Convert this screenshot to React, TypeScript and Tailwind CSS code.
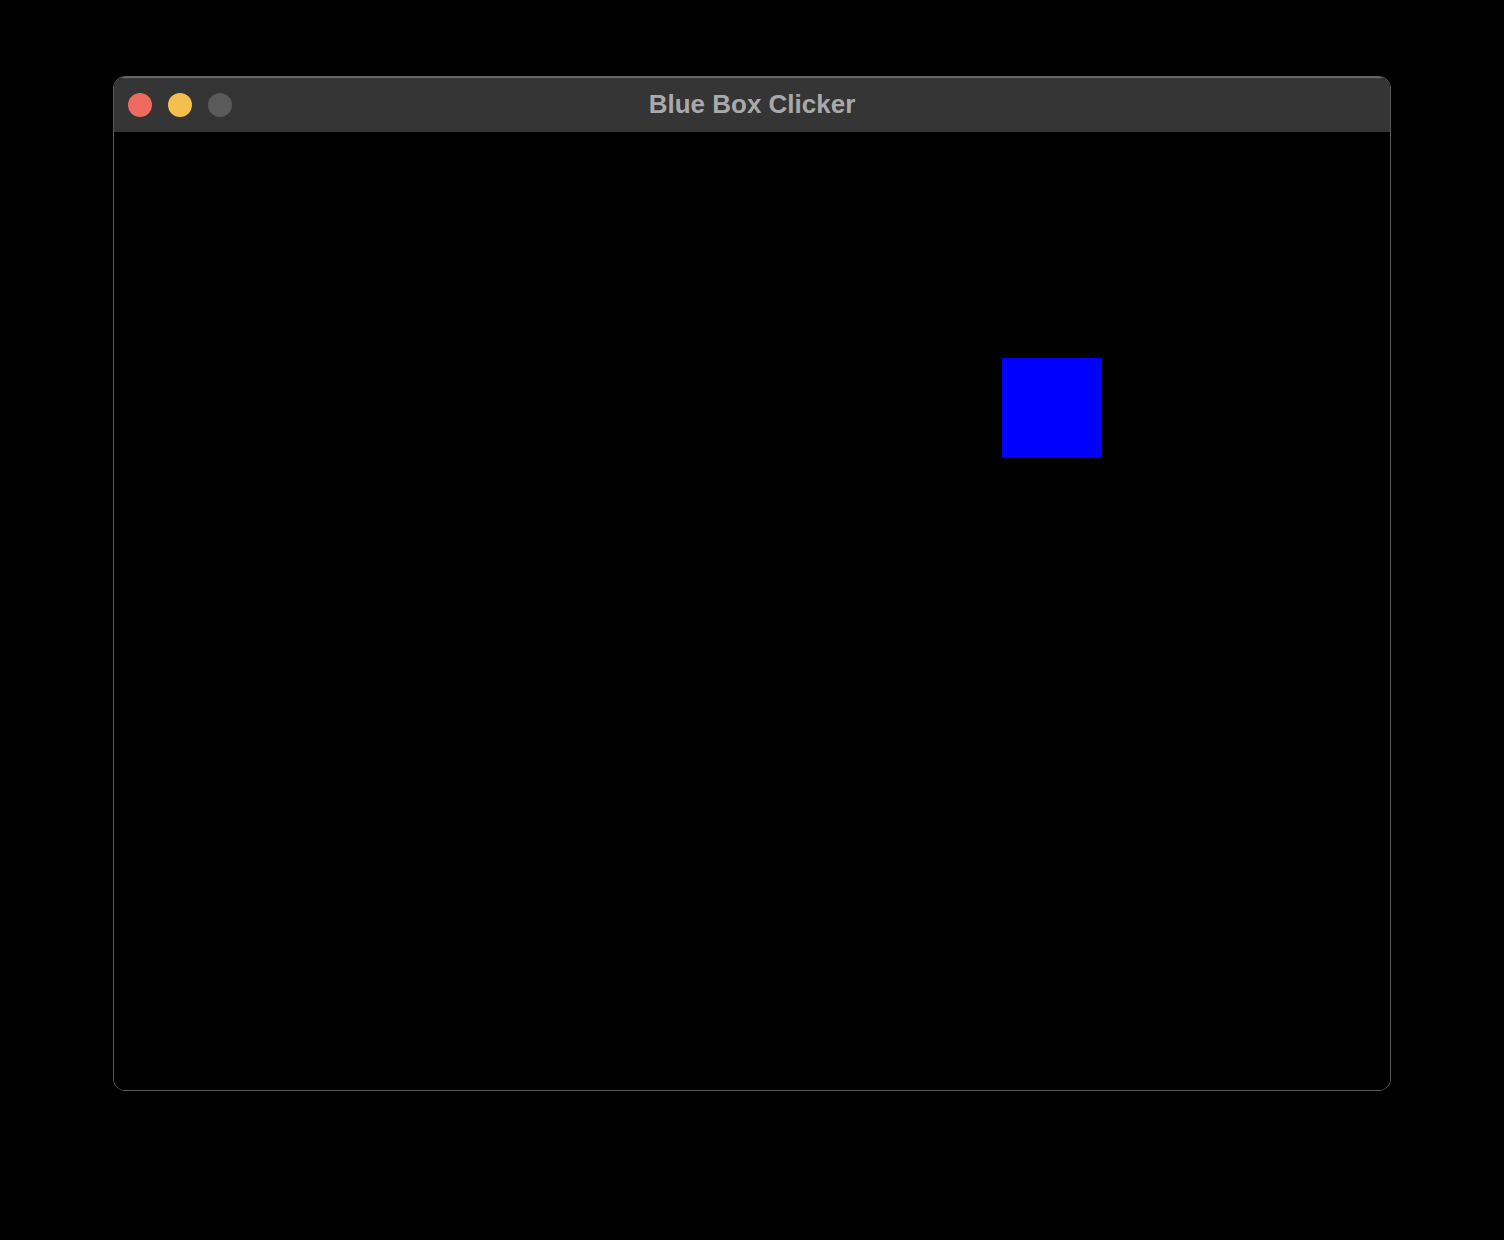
import React, { useState } from 'react';

export default function App() {
  const [clicks, setClicks] = useState(0);
  const [pos, setPos] = useState({ x: 888, y: 226 });

  const moveBox = () => {
    setClicks(clicks + 1);
    setPos({ x: Math.floor(Math.random() * 1176), y: Math.floor(Math.random() * 858) });
  };

  return (
    <div className="w-full h-[1240px] bg-black pt-[76px] pl-[113px] font-['Liberation_Sans',sans-serif]">
      <div className="w-[1278px] h-[1015px] rounded-[12px] border border-[#5c5c5c] overflow-hidden flex flex-col bg-black">
        <div className="h-[55px] bg-[#353535] border-t border-[#6e6e6e] flex items-center px-[14px] relative">
          <div className="flex gap-[16px]">
            <div className="w-[24px] h-[24px] rounded-full bg-[#ec6a5e]" />
            <div className="w-[24px] h-[24px] rounded-full bg-[#f4bf4f]" />
            <div className="w-[24px] h-[24px] rounded-full bg-[#5a5a5a]" />
          </div>
          <div className="absolute inset-0 pb-[2px] flex items-center justify-center text-[26px] font-bold text-[#a9a9a9]">
            Blue Box Clicker
          </div>
        </div>
        <div className="flex-1 relative bg-black" data-clicks={clicks}>
          <button
            onClick={moveBox}
            className="absolute w-[100px] h-[100px] bg-[#0000ff]"
            style={{ left: pos.x, top: pos.y }}
          />
        </div>
      </div>
    </div>
  );
}
